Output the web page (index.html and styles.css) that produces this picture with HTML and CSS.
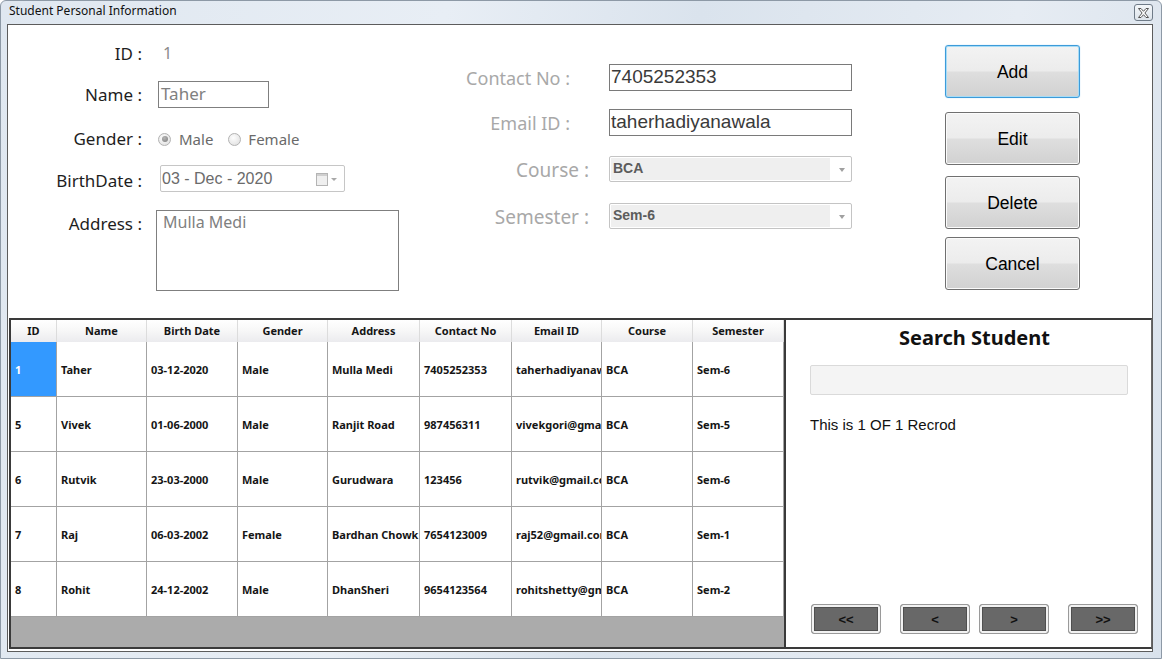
FILE: index.html
```html
<!DOCTYPE html>
<html>
<head>
<meta charset="utf-8">
<title>Student Personal Information</title>
<link rel="stylesheet" href="styles.css">
</head>
<body>
<div class="window">
  <div class="titlebar">
    <span class="title">Student Personal Information</span>
    <span class="close">
      <svg width="11" height="10" viewBox="0 0 11 10"><path d="M0.5,0.5 L3,0.5 L5.5,3.3 L8,0.5 L10.5,0.5 L6.9,5 L10.5,9.5 L8,9.5 L5.5,6.7 L3,9.5 L0.5,9.5 L4.1,5 Z" fill="#fff" stroke="#555" stroke-width="1"/></svg>
    </span>
  </div>
  <div class="client">
    <div class="top">
      <div class="form-left">
        <div class="row row-id"><span class="lbl">ID :</span><span class="idval">1</span></div>
        <div class="row row-name"><span class="lbl">Name :</span><div class="textbox name-box">Taher</div></div>
        <div class="row row-gender">
          <span class="lbl">Gender :</span>
          <span class="radio checked"></span><span class="rtext">Male</span>
          <span class="radio second"></span><span class="rtext">Female</span>
        </div>
        <div class="row row-date"><span class="lbl lbl-date">BirthDate :</span>
          <div class="datepick"><span class="datetext">03 - Dec - 2020</span>
            <svg class="calicon" width="24" height="14" viewBox="0 0 24 14"><rect x="0.5" y="1.5" width="11" height="12" fill="#efefef" stroke="#b4b4b4"/><rect x="1" y="2" width="10" height="2" fill="#cfcfcf"/><path d="M15,6 L21,6 L18,9 Z" fill="#a8a8a8"/></svg>
          </div>
        </div>
        <div class="row row-addr"><span class="lbl lbl-addr">Address :</span><div class="textarea">Mulla Medi</div></div>
      </div>
      <div class="form-mid">
        <div class="mrow row-contact"><span class="mlbl">Contact No :</span><div class="mbox">7405252353</div></div>
        <div class="mrow row-email"><span class="mlbl">Email ID :</span><div class="mbox">taherhadiyanawala</div></div>
        <div class="mrow row-course"><span class="mlbl big">Course :</span><div class="combo"><span class="ctext">BCA</span><span class="carrow"></span></div></div>
        <div class="mrow row-sem"><span class="mlbl big">Semester :</span><div class="combo"><span class="ctext">Sem-6</span><span class="carrow"></span></div></div>
      </div>
      <div class="actions">
        <button class="btn btn-add">Add</button>
        <button class="btn btn-edit">Edit</button>
        <button class="btn btn-delete">Delete</button>
        <button class="btn btn-cancel">Cancel</button>
      </div>
    </div>
    <div class="bottom">
      <div class="grid">
        <div class="dg-head">
          <div class="hc">ID</div><div class="hc">Name</div><div class="hc">Birth Date</div><div class="hc">Gender</div><div class="hc">Address</div><div class="hc">Contact No</div><div class="hc">Email ID</div><div class="hc">Course</div><div class="hc">Semester</div>
        </div>
        <div class="dg-row">
          <div class="c sel">1</div><div class="c">Taher</div><div class="c">03-12-2020</div><div class="c">Male</div><div class="c">Mulla Medi</div><div class="c">7405252353</div><div class="c"><span class="clip">taherhadiyanawala@gmail.com</span></div><div class="c">BCA</div><div class="c">Sem-6</div>
        </div>
        <div class="dg-row">
          <div class="c">5</div><div class="c">Vivek</div><div class="c">01-06-2000</div><div class="c">Male</div><div class="c">Ranjit Road</div><div class="c">987456311</div><div class="c"><span class="clip">vivekgori@gmail.com</span></div><div class="c">BCA</div><div class="c">Sem-5</div>
        </div>
        <div class="dg-row">
          <div class="c">6</div><div class="c">Rutvik</div><div class="c">23-03-2000</div><div class="c">Male</div><div class="c">Gurudwara</div><div class="c">123456</div><div class="c"><span class="clip">rutvik@gmail.com</span></div><div class="c">BCA</div><div class="c">Sem-6</div>
        </div>
        <div class="dg-row">
          <div class="c">7</div><div class="c">Raj</div><div class="c">06-03-2002</div><div class="c">Female</div><div class="c">Bardhan Chowk</div><div class="c">7654123009</div><div class="c"><span class="clip">raj52@gmail.com</span></div><div class="c">BCA</div><div class="c">Sem-1</div>
        </div>
        <div class="dg-row">
          <div class="c">8</div><div class="c">Rohit</div><div class="c">24-12-2002</div><div class="c">Male</div><div class="c">DhanSheri</div><div class="c">9654123564</div><div class="c"><span class="clip">rohitshetty@gmail.com</span></div><div class="c">BCA</div><div class="c">Sem-2</div>
        </div>
        <div class="dg-empty"></div>
      </div>
      <div class="search">
        <div class="search-title">Search Student</div>
        <div class="search-box"></div>
        <div class="record">This is 1 OF 1 Recrod</div>
        <div class="nav">
          <button class="nbtn n-first">&lt;&lt;</button>
          <button class="nbtn n-prev">&lt;</button>
          <button class="nbtn n-next">&gt;</button>
          <button class="nbtn n-last">&gt;&gt;</button>
        </div>
      </div>
    </div>
  </div>
</div>
</body>
</html>
```

FILE: styles.css
```css
html, body {
  margin: 0;
  padding: 0;
}
body {
  background: #ffffff;
  width: 1164px;
  height: 663px;
  overflow: hidden;
  font-family: "Noto Sans", "Open Sans", sans-serif;
}
.window {
  width: 1162px;
  height: 659px;
  box-sizing: border-box;
  border: 1px solid #8d99a6;
  border-radius: 6px 6px 0 0;
  background: linear-gradient(100deg, #dfe7f0 0%, #e8eef5 35%, #dae3ed 55%, #e6ecf3 80%, #d9e2ec 100%);
  display: flex;
  flex-direction: column;
}
.titlebar {
  height: 23px;
  display: flex;
  align-items: center;
  padding-left: 8px;
  flex-shrink: 0;
}
.title {
  font-family: "Noto Sans", sans-serif;
  font-size: 12px;
  line-height: 16px;
  color: #111;
  margin-top: -3px;
}
.close {
  margin-left: auto;
  margin-right: 8px;
  align-self: flex-start;
  margin-top: 3px;
  width: 19px;
  height: 17px;
  box-sizing: border-box;
  border: 1px solid #6f7b88;
  border-radius: 3px;
  background: linear-gradient(#f4f7fa, #dde4eb);
  display: flex;
  align-items: center;
  justify-content: center;
}
.client {
  margin-left: 6px;
  width: 1146px;
  height: 628px;
  box-sizing: border-box;
  border: 1px solid #5c5c5c;
  background: #fff;
  display: flex;
  flex-direction: column;
}
.top {
  height: 293px;
  display: flex;
  flex-shrink: 0;
}
/* left form */
.form-left {
  width: 412px;
  padding-top: 17px;
  box-sizing: border-box;
}
.row {
  display: flex;
  align-items: center;
}
.lbl {
  width: 134px;
  flex-shrink: 0;
  text-align: right;
  font-size: 17px;
  line-height: 24px;
  color: #1e1e1e;
}
.row-id { height: 24px; }
.idval {
  margin-left: 21px;
  font-size: 16px;
  color: #8a8a8a;
  margin-top: -2px;
}
.row-name { margin-top: 15px; height: 27px; }
.textbox {
  box-sizing: border-box;
  border: 1px solid #7f7f7f;
  height: 27px;
  line-height: 23px;
  padding-left: 2px;
  font-size: 17px;
  color: #808080;
}
.name-box {
  margin-left: 16px;
  width: 111px;
}
.row-gender { margin-top: 20px; height: 22px; }
.radio {
  width: 13px;
  height: 13px;
  box-sizing: border-box;
  border-radius: 50%;
  border: 1px solid #b2b2b2;
  background: radial-gradient(circle at 40% 35%, #fdfdfd, #dcdcdc);
  margin-left: 16px;
  flex-shrink: 0;
  position: relative;
}
.radio.checked::after {
  content: "";
  position: absolute;
  left: 2.5px;
  top: 2.5px;
  width: 6px;
  height: 6px;
  border-radius: 50%;
  background: radial-gradient(circle at 40% 35%, #b5b5b5, #7c7c7c);
}
.radio.second { margin-left: 15px; }
.rtext {
  font-size: 15px;
  color: #6a6a6a;
  margin-left: 8px;
}
.radio.second + .rtext { margin-left: 7px; }
.row-date { margin-top: 15px; height: 27px; }
.lbl-date { padding-top: 5px; }
.datepick {
  margin-left: 18px;
  width: 185px;
  height: 27px;
  box-sizing: border-box;
  border: 1px solid #c6c6c6;
  border-radius: 2px;
  display: flex;
  align-items: center;
  padding-left: 1px;
}
.datetext {
  font-family: "Liberation Sans", Arial, sans-serif;
  font-size: 16px;
  color: #6b6b6b;
}
.calicon {
  margin-left: auto;
  margin-right: 4px;
}
.row-addr { margin-top: 18px; align-items: flex-start; }
.lbl-addr { padding-top: 2px; }
.textarea {
  margin-left: 14px;
  width: 243px;
  height: 81px;
  box-sizing: border-box;
  border: 1px solid #7f7f7f;
  padding: 0 0 0 6px;
  font-size: 16px;
  line-height: 22px;
  color: #808080;
}
/* middle form */
.form-mid {
  width: 440px;
  padding-top: 39px;
  box-sizing: border-box;
}
.mrow {
  display: flex;
  align-items: center;
  height: 27px;
}
.mlbl {
  width: 170px;
  box-sizing: border-box;
  text-align: right;
  padding-right: 20px;
  font-size: 18px;
  line-height: 22px;
  color: #a8a8a8;
  flex-shrink: 0;
}
.mlbl.big {
  font-size: 19px;
  padding-right: 1px;
  padding-top: 1px;
}
.mbox {
  margin-left: 19px;
  width: 243px;
  height: 27px;
  box-sizing: border-box;
  border: 1px solid #7a7a7a;
  font-family: "Liberation Sans", Arial, sans-serif;
  font-size: 19px;
  line-height: 24px;
  padding-left: 1px;
  color: #3a3a3a;
}
.row-email { margin-top: 18px; }
.row-course { margin-top: 20px; height: 26px; }
.row-sem { margin-top: 21px; height: 26px; }
.combo {
  margin-left: 19px;
  width: 243px;
  height: 26px;
  box-sizing: border-box;
  border: 1px solid #c4c4c4;
  border-radius: 2px;
  padding: 1px;
  display: flex;
  align-items: center;
}
.ctext {
  width: 219px;
  height: 22px;
  background: #efefef;
  font-family: "Liberation Sans", Arial, sans-serif;
  font-weight: bold;
  font-size: 14px;
  line-height: 20px;
  color: #5c5c5c;
  padding-left: 2px;
  box-sizing: border-box;
}
.carrow {
  margin-left: 9px;
  width: 0;
  height: 0;
  border-left: 3.5px solid transparent;
  border-right: 3.5px solid transparent;
  border-top: 4px solid #a0a0a0;
  margin-top: 2px;
}
/* action buttons */
.actions {
  margin-left: 85px;
  padding-top: 20px;
  display: flex;
  flex-direction: column;
}
.btn {
  width: 135px;
  height: 53px;
  box-sizing: border-box;
  border: 1px solid #707070;
  border-radius: 3px;
  background: linear-gradient(#f3f3f3 0%, #ececec 48%, #dedede 52%, #d1d1d1 100%);
  box-shadow: inset 0 0 0 1px #fbfbfb;
  font-family: "Liberation Sans", Arial, sans-serif;
  font-size: 17.5px;
  color: #000;
  padding: 2px 0 0 0;
  margin: 0;
}
.btn-add {
  border-color: #3d9bd9;
  box-shadow: inset 0 0 0 1px #a7dcf6, 0 0 1px #7cc4ee;
}
.btn-edit { margin-top: 14px; }
.btn-delete { margin-top: 11px; }
.btn-cancel { margin-top: 8px; }
/* bottom */
.bottom {
  flex: 1;
  display: flex;
}
.grid {
  margin-left: 1px;
  width: 777px;
  height: 331px;
  box-sizing: border-box;
  border: 2px solid #3a3a3a;
  display: flex;
  flex-direction: column;
  font-family: "Noto Sans", sans-serif;
  font-weight: bold;
  font-size: 11px;
  color: #151515;
}
.dg-head, .dg-row {
  display: grid;
  grid-template-columns: 46px 90px 91px 90px 92px 92px 90px 91px 91px;
}
.dg-head {
  height: 22px;
}
.hc {
  box-sizing: border-box;
  border-right: 1px solid #dcdcdc;
  border-bottom: 1px solid #a9a9a9;
  background: linear-gradient(#ffffff 0%, #f7f7f7 50%, #ebebee 100%);
  text-align: center;
  line-height: 22px;
}
.dg-row {
  height: 55px;
}
.c {
  box-sizing: border-box;
  border-right: 1px solid #a3a3a3;
  border-bottom: 1px solid #a3a3a3;
  padding-left: 4px;
  line-height: 56px;
  white-space: nowrap;
  overflow: hidden;
  background: #fff;
}
.clip {
  display: block;
  width: 85px;
  overflow: hidden;
  white-space: nowrap;
}
.c.sel {
  background: #3399ff;
  color: #fff;
}
.dg-empty {
  flex: 1;
  background: #ababab;
}
/* search panel */
.search {
  flex: 1;
  height: 331px;
  box-sizing: border-box;
  border-top: 2px solid #3a3a3a;
  border-bottom: 2px solid #3a3a3a;
  border-right: 1px solid #6a6a6a;
  display: flex;
  flex-direction: column;
}
.search-title {
  margin-top: 5px;
  text-align: center;
  padding-left: 12px;
  font-family: "Noto Sans", sans-serif;
  font-weight: bold;
  font-size: 20px;
  line-height: 26px;
  color: #111;
}
.search-box {
  margin-top: 14px;
  margin-left: 24px;
  width: 318px;
  height: 30px;
  box-sizing: border-box;
  border: 1px solid #dadada;
  border-radius: 2px;
  background: #f4f4f4;
}
.record {
  margin-top: 20px;
  margin-left: 24px;
  font-family: "Liberation Sans", Arial, sans-serif;
  font-size: 15px;
  line-height: 20px;
  color: #111;
}
.nav {
  margin-top: auto;
  margin-bottom: 13px;
  margin-left: 25px;
  display: flex;
}
.nbtn {
  width: 70px;
  height: 30px;
  box-sizing: border-box;
  border: 1px solid #9a9a9a;
  border-radius: 3px;
  background: #686868;
  box-shadow: inset 0 0 0 2px #f2f2f2, inset 0 0 0 3px #505050;
  font-family: "Liberation Sans", Arial, sans-serif;
  font-weight: bold;
  font-size: 13px;
  color: #111;
  padding: 0;
  margin: 0;
}
.n-prev { margin-left: 19px; }
.n-next { margin-left: 9px; }
.n-last { margin-left: 19px; }
```
